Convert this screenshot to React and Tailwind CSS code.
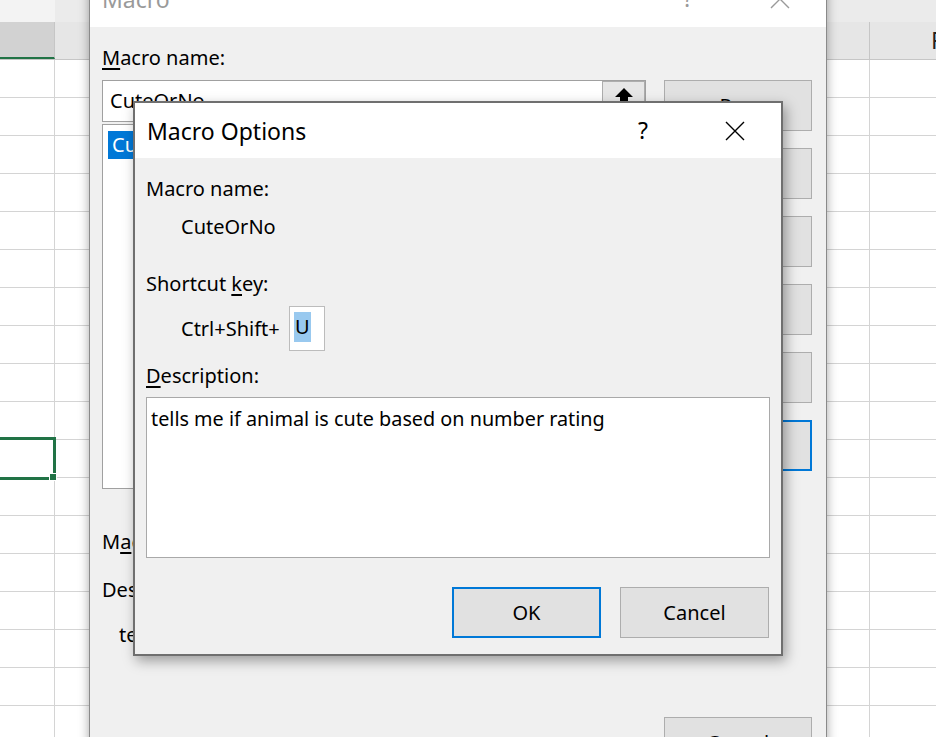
import React from "react"

const rows = Array.from({ length: 18 })

const CloseIcon = ({ color = "#000" }) => (
    <svg width="20" height="20" viewBox="0 0 20 20">
        <path d="M1 1 L19 19 M19 1 L1 19" stroke={color} strokeWidth="1.4" fill="none" />
    </svg>
)

const TitleBar = ({ title, height, muted }) => (
    <div className={`flex items-center bg-white shrink-0 ${height}`}>
        <span className={`pl-[12px] text-[23px] leading-[32px] ${muted ? "text-[#9a9a9a]" : "text-black"}`}>{title}</span>
        <div className={`ml-auto w-[92px] h-full flex items-center justify-center text-[23px] ${muted ? "text-[#9a9a9a]" : "text-black"}`}>?</div>
        <div className="w-[92px] h-full flex items-center justify-center">
            <CloseIcon color={muted ? "#9a9a9a" : "#000"} />
        </div>
    </div>
)

const Sheet = () => (
    <div className="absolute inset-0 bg-white">
        <div className="flex h-[22px]">
            <div className="w-[55px] shrink-0 bg-[#f3f3f3]" />
            <div className="flex-1 bg-[#ebebeb]" />
        </div>
        <div className="flex h-[38px] border-b border-[#c6c6c6] bg-[#e6e6e6]">
            <div className="w-[55px] shrink-0 bg-[#d2d2d2] border-r border-[#c6c6c6] border-b-2 border-b-[#217346]" />
            <div className="w-[815px] shrink-0 border-r border-[#c6c6c6]" />
            <div className="w-[134px] shrink-0 flex items-center justify-center text-[23px] text-[#222]">F</div>
        </div>
        {rows.map((_, i) => (
            <div key={i} className="flex h-[38px] border-b border-[#d4d4d4]">
                <div className="w-[55px] shrink-0 border-r border-[#d4d4d4]" />
                <div className="w-[815px] shrink-0 border-r border-[#d4d4d4]" />
                <div className="w-[134px] shrink-0" />
            </div>
        ))}
        <div className="absolute left-[-3px] top-[437px] w-[59px] h-[43px] border-[3px] border-[#217346]" />
        <div className="absolute left-[49px] top-[473px] w-[8px] h-[8px] bg-[#217346] border border-white" />
    </div>
)

const MacroDialog = () => {
    const buttons = ["Run", "Step Into", "Edit", "Create", "Delete", "Options..."]
    return (
        <div className="absolute left-[89px] top-[-31px] w-[738px] h-[820px] flex flex-col bg-[#f0f0f0] border border-[#8a8a8a] shadow-[0_0_10px_rgba(0,0,0,0.35)]">
            <TitleBar title="Macro" height="h-[57px]" muted />
            <div className="flex pl-[12px]">
                <div className="w-[544px] shrink-0 flex flex-col">
                    <div className="mt-[17px] h-[28px] leading-[28px]">
                        <span className="underline underline-offset-[3px]">M</span>acro name:
                    </div>
                    <div className="mt-[8px] h-[42px] flex bg-white border border-[#a0a0a0]">
                        <span className="flex-1 pl-[7px] leading-[40px]">CuteOrNo</span>
                        <div className="w-[43px] h-full border border-[#adadad] bg-[#e6e6e6] flex justify-center pt-[6px]">
                            <svg width="20" height="18" viewBox="0 0 20 18">
                                <path d="M10 0 L19 9 L14 9 L14 18 L6 18 L6 9 L1 9 Z" fill="#000" />
                            </svg>
                        </div>
                    </div>
                    <div className="mt-[2px] h-[365px] bg-white border border-[#a0a0a0] p-[5px]">
                        <div className="h-[28px] leading-[28px] bg-[#0078d7] text-white pl-[4px] mt-[1px]">CuteOrNo</div>
                    </div>
                    <div className="mt-[39px] h-[28px] leading-[28px]">
                        M<span className="underline underline-offset-[3px]">a</span>cro in:
                    </div>
                    <div className="mt-[20px] h-[28px] leading-[28px]">Description</div>
                    <div className="mt-[17px] pl-[17px] h-[28px] leading-[28px]">tells me if animal is cute based on number rating</div>
                </div>
                <div className="ml-[18px] w-[148px] shrink-0 flex flex-col">
                    <div className="mt-[53px] flex flex-col gap-[17px]">
                        {buttons.map((b, i) => (
                            <div
                                key={b}
                                className={`h-[51px] flex items-center justify-center bg-[#e1e1e1] ${i === 5 ? "border-2 border-[#0078d7]" : "border border-[#adadad]"}`}
                            >
                                {b}
                            </div>
                        ))}
                    </div>
                    <div className="mt-[246px] h-[51px] flex items-center justify-center bg-[#e1e1e1] border border-[#adadad]">Cancel</div>
                </div>
            </div>
        </div>
    )
}

const OptionsDialog = () => (
    <div className="absolute left-[133px] top-[101px] w-[650px] h-[555px] flex flex-col bg-[#f0f0f0] border-2 border-[#6f6f6f] shadow-[3px_5px_12px_rgba(0,0,0,0.35)]">
        <TitleBar title="Macro Options" height="h-[55px]" />
        <div className="flex flex-col px-[11px]">
            <div className="mt-[17px] h-[28px] leading-[28px]">Macro name:</div>
            <div className="mt-[10px] pl-[35px] h-[28px] leading-[28px]">CuteOrNo</div>
            <div className="mt-[29px] h-[28px] leading-[28px]">
                Shortcut <span className="underline underline-offset-[3px]">k</span>ey:
            </div>
            <div className="mt-[8px] h-[45px] flex items-center pl-[35px]">
                <span className="w-[108px]">Ctrl+Shift+</span>
                <div className="w-[36px] h-[45px] bg-white border border-[#bcbcbc] pl-[4px] pt-[5px]">
                    <span className="inline-block h-[30px] leading-[30px] bg-[#99c9ef] px-[1px]">U</span>
                </div>
            </div>
            <div className="mt-[11px] h-[28px] leading-[28px]">
                <span className="underline underline-offset-[3px]">D</span>escription:
            </div>
            <div className="mt-[7px] w-[624px] h-[161px] bg-white border border-[#a9a9a9] pl-[4px] pt-[7px] leading-[28px] text-[19.8px]">
                tells me if animal is cute based on number rating
            </div>
            <div className="mt-[29px] flex justify-end gap-[19px] pr-[1px]">
                <div className="w-[149px] h-[51px] flex items-center justify-center bg-[#e1e1e1] border-2 border-[#0078d7]">OK</div>
                <div className="w-[149px] h-[51px] flex items-center justify-center bg-[#e1e1e1] border border-[#adadad]">Cancel</div>
            </div>
        </div>
    </div>
)

const App = () => {
    return (
        <div className="relative w-[936px] h-[737px] overflow-hidden font-['Noto_Sans',sans-serif] text-[20px] text-black">
            <Sheet />
            <MacroDialog />
            <OptionsDialog />
        </div>
    )
}

export default App
